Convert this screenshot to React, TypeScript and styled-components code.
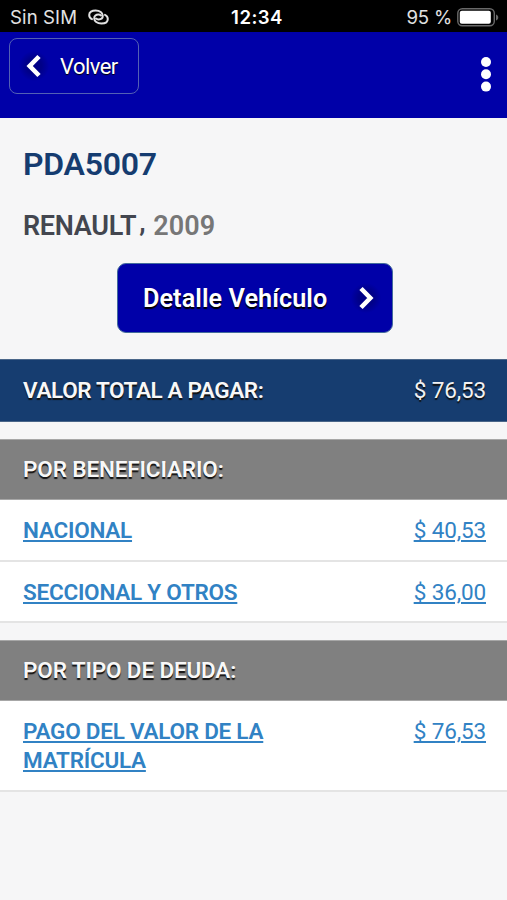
import React from "react";
import styled, { createGlobalStyle } from "styled-components";

const GlobalStyle = createGlobalStyle`
  * { box-sizing: border-box; }
  body { margin: 0; background: #f6f6f7; font-family: Roboto, sans-serif; }
  button { font-family: inherit; }
`;

const Screen = styled.div`
  width: 507px;
  height: 900px;
  overflow: hidden;
  background: #f6f6f7;
`;

const StatusBar = styled.div`
  display: grid;
  grid-template-columns: 1fr auto 1fr;
  align-items: center;
  height: 32px;
  padding: 2px 8px 0 10px;
  background: #000;
  color: #e2e2e2;
  font: 400 18.6px/28px Inter, sans-serif;
`;

const StatusGroup = styled.div<{ $end?: boolean }>`
  display: flex;
  align-items: center;
  gap: ${(p) => (p.$end ? "5px" : "11px")};
  justify-content: ${(p) => (p.$end ? "flex-end" : "flex-start")};
  letter-spacing: ${(p) => (p.$end ? "-0.2px" : "0.1px")};
  white-space: nowrap;
`;

const Clock = styled.span`
  padding-left: 5px;
  color: #fff;
  font-weight: 600;
  letter-spacing: 0.45px;
`;

const AppBar = styled.header`
  display: flex;
  justify-content: space-between;
  align-items: flex-start;
  height: 86px;
  padding: 6px 14px 0 9px;
  background: #0000a8;
`;

const BackButton = styled.button`
  display: flex;
  align-items: center;
  gap: 11px;
  width: 130px;
  height: 56px;
  padding: 0 0 0 9px;
  border: 1px solid #5360b4;
  border-radius: 8px;
  background: transparent;
  color: #fff;
  font-size: 22px;
  letter-spacing: -0.55px;
  text-shadow: 0 1px 1px #000;
`;

const IconDisc = styled.span`
  display: grid;
  place-items: center;
  width: 30px;
  height: 30px;
  border-radius: 50%;
  background: radial-gradient(circle, #000087 35%, #0000a8 72%);
`;

const MenuButton = styled.button`
  display: block;
  margin-top: 17px;
  padding: 0;
  border: 0;
  background: none;
  line-height: 0;
`;

const Summary = styled.section`
  display: flex;
  flex-direction: column;
  height: 241px;
  padding: 26px 23px 0;
`;

const Plate = styled.h1`
  margin: 0;
  color: #153c70;
  font-size: 32px;
  line-height: 40px;
  font-weight: 600;
  letter-spacing: -0.25px;
`;

const Model = styled.h2`
  display: flex;
  gap: 6px;
  margin: 24px 0 0;
  color: #43464f;
  font-size: 27px;
  line-height: 36px;
  font-weight: 600;
  letter-spacing: -0.3px;
`;

const Comma = styled.span`
  display: inline-block;
  margin: 0 2px 0 3px;
  transform: translateY(-4px);
`;

const Year = styled.span`
  color: #777;
  letter-spacing: 0.1px;
`;

const DetailButton = styled.button`
  display: flex;
  align-items: center;
  justify-content: space-between;
  width: 276px;
  height: 70px;
  margin: 19px 0 0 94px;
  padding: 0 11px 0 25px;
  border: 1px solid #426b9c;
  border-radius: 9px;
  background: #0000a8;
  color: #fff;
  font-size: 25.2px;
  font-weight: 600;
  letter-spacing: 0.08px;
  text-shadow: 0 1.5px 1px #000;
`;

const Group = styled.section`
  margin-bottom: 17px;
`;

const Band = styled.div<{ $total?: boolean }>`
  display: flex;
  justify-content: space-between;
  align-items: center;
  height: ${(p) => (p.$total ? "63px" : "61px")};
  padding: 0 21px 1px 23px;
  border-top: 1px solid ${(p) => (p.$total ? "#4a6689" : "#a7a7a7")};
  border-bottom: 1px solid ${(p) => (p.$total ? "#4a6689" : "#a7a7a7")};
  background: ${(p) => (p.$total ? "#163d70" : "#808080")};
  color: #f8f8f8;
  font-size: 22.5px;
  font-weight: ${(p) => (p.$total ? 600 : 560)};
  letter-spacing: ${(p) => (p.$total ? "-0.37px" : "-0.14px")};
  text-shadow: 0 1.5px 1px #111;
`;

const Row = styled.div<{ $height: number }>`
  display: flex;
  justify-content: space-between;
  height: ${(p) => p.$height}px;
  padding: 16px 21px 0 23px;
  border-bottom: 2px solid #e4e4e4;
  background: #fff;
`;

const ItemLink = styled.a`
  width: 260px;
  color: #3182c4;
  font-size: 22.5px;
  line-height: 28.5px;
  font-weight: 600;
  letter-spacing: -0.24px;
  text-decoration: underline;
  text-decoration-thickness: 1.5px;
  text-underline-offset: 2px;
`;

const Amount = styled.span<{ $link?: boolean }>`
  color: ${(p) => (p.$link ? "#3182c4" : "#f2f2f2")};
  font-size: 22.5px;
  line-height: 28.5px;
  font-weight: 400;
  letter-spacing: -0.13px;
  text-decoration: ${(p) => (p.$link ? "underline" : "none")};
  text-decoration-thickness: 1.5px;
  text-underline-offset: 2px;
`;

const Chevron = ({ left = false }: { left?: boolean }) => (
  <svg width="16" height="24" viewBox="0 0 16 24" fill="none" stroke="#fff" strokeWidth="4.6">
    <path d={left ? "M13 2.5 3.7 12 13 21.5" : "M3 2.5 12.3 12 3 21.5"} />
  </svg>
);

const HotspotIcon = () => (
  <svg width="21" height="16" viewBox="0 0 21 16" fill="none" stroke="#e2e2e2" strokeWidth="2" strokeLinecap="round">
    <path d="M4 10.2C2.2 9.4 1.2 7.8 1.2 6C1.2 3.2 3.8 1.4 7.6 1.4C11.8 1.4 14.8 3.8 14.8 6.8C14.8 9 13 10.4 10.6 10.4C9.4 10.4 8.6 10.1 8 9.6" />
    <path d="M17 5.8C18.8 6.6 19.8 8.2 19.8 10C19.8 12.8 17.2 14.6 13.4 14.6C9.2 14.6 6.2 12.2 6.2 9.2C6.2 7 8 5.6 10.4 5.6C11.6 5.6 12.4 5.9 13 6.4" />
  </svg>
);

const BatteryIcon = () => (
  <svg width="42" height="19" viewBox="0 0 42 19">
    <rect x=".8" y=".8" width="36.5" height="17" rx="4.5" fill="none" stroke="#696969" strokeWidth="1.4" />
    <rect x="2.8" y="2.8" width="31" height="13" rx="2" fill="#fff" />
    <path d="M39 6.5c3 1 3 5 0 6z" fill="#696969" />
  </svg>
);

const groups = [
  {
    title: "POR BENEFICIARIO:",
    items: [
      { name: "NACIONAL", amount: "$ 40,53", height: 62 },
      { name: "SECCIONAL Y OTROS", amount: "$ 36,00", height: 61 },
    ],
  },
  {
    title: "POR TIPO DE DEUDA:",
    items: [{ name: "PAGO DEL VALOR DE LA MATRÍCULA", amount: "$ 76,53", height: 91 }],
  },
];

export default function App() {
  return (
    <Screen>
      <GlobalStyle />
      <StatusBar>
        <StatusGroup>Sin SIM <HotspotIcon /></StatusGroup>
        <Clock>12:34</Clock>
        <StatusGroup $end>95 % <BatteryIcon /></StatusGroup>
      </StatusBar>
      <AppBar>
        <BackButton><IconDisc><Chevron left /></IconDisc>Volver</BackButton>
        <MenuButton aria-label="Menú">
          <svg width="14" height="38" viewBox="0 0 14 38" fill="#fff">
            <circle cx="7" cy="7" r="5" />
            <circle cx="7" cy="19.3" r="5" />
            <circle cx="7" cy="31.6" r="5" />
          </svg>
        </MenuButton>
      </AppBar>
      <Summary>
        <Plate>PDA5007</Plate>
        <Model><span>RENAULT<Comma>,</Comma></span> <Year>2009</Year></Model>
        <DetailButton>Detalle Vehículo<IconDisc><Chevron /></IconDisc></DetailButton>
      </Summary>
      <Group>
        <Band $total>VALOR TOTAL A PAGAR:<Amount>$ 76,53</Amount></Band>
      </Group>
      {groups.map((group) => (
        <Group key={group.title}>
          <Band>{group.title}</Band>
          {group.items.map((item) => (
            <Row key={item.name} $height={item.height}>
              <ItemLink>{item.name}</ItemLink>
              <Amount $link>{item.amount}</Amount>
            </Row>
          ))}
        </Group>
      ))}
    </Screen>
  );
}
